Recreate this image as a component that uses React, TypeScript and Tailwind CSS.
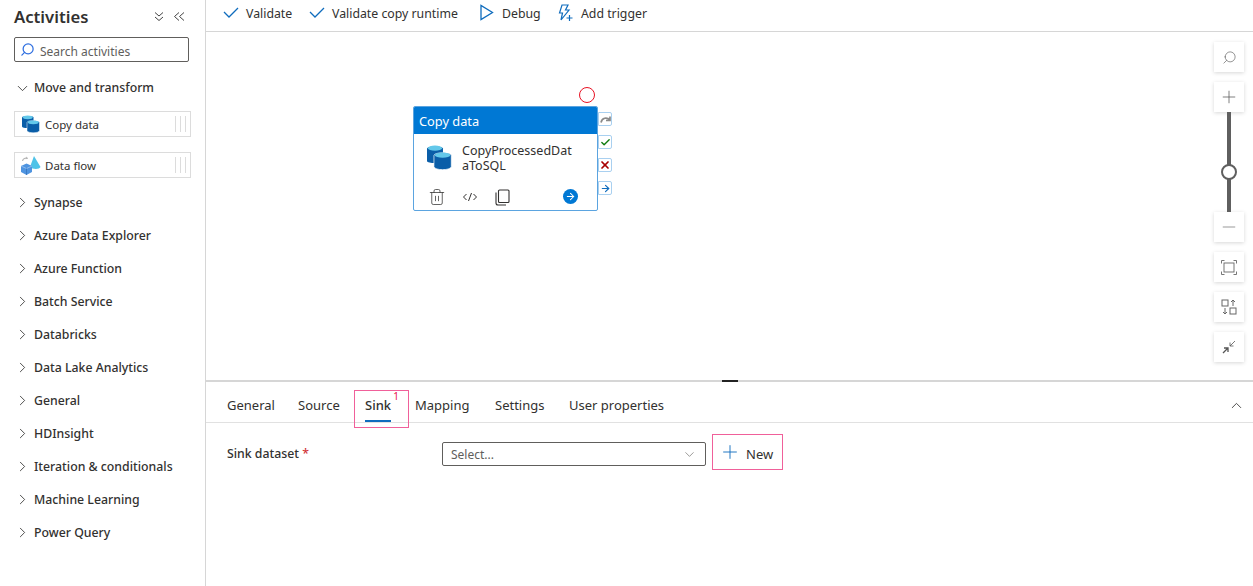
import { type ReactNode } from 'react';
import { ChevronDown, ChevronRight, ChevronUp, Search, Plus, Trash2, Minus, ArrowRight, X, Check } from 'lucide-react';

const GROUPS = [
  'Synapse',
  'Azure Data Explorer',
  'Azure Function',
  'Batch Service',
  'Databricks',
  'Data Lake Analytics',
  'General',
  'HDInsight',
  'Iteration & conditionals',
  'Machine Learning',
  'Power Query',
];

const TABS = [
  { label: 'General', width: 'w-[47px]' },
  { label: 'Source', width: 'w-[43px]' },
  { label: 'Sink', width: 'w-[26px]' },
  { label: 'Mapping', width: 'w-[56px]' },
  { label: 'Settings', width: 'w-[50px]' },
  { label: 'User properties', width: 'w-[96px]' },
];

function CopyIcon({ size }: { size: number }) {
  return (
    <svg width={size} height={size} viewBox="0 0 18 18">
      <path d="M0 2.500C0 .500 11.500 .500 11.500 2.500V11.500C11.500 13.500 0 13.500 0 11.500z" fill="#0a5ea8" />
      <ellipse cx="5.750" cy="2.300" rx="5" ry="1.900" fill="#63c8ea" />
      <path d="M5 7.500C5 5 17.500 5 17.500 7.500V15.500C17.500 18.500 5 18.500 5 15.500z" fill="#0a5ea8" stroke="#fff" strokeWidth="0.500" />
      <ellipse cx="11.250" cy="7.300" rx="5.500" ry="1.900" fill="#63c8ea" />
    </svg>
  );
}

function DataFlowIcon() {
  return (
    <svg width="20" height="20" viewBox="0 0 20 20">
      <path d="M1.500 6a3.500 3.500 0 0 1 5-2.500" fill="none" stroke="#b5b5b5" strokeWidth="1.200" />
      <path d="M5.500 1.500l1.500 2-2.300.7z" fill="#b5b5b5" />
      <path d="M13 1l6.500 11c-1 2.500-8 2.500-10.500 0z" fill="#4fc3e8" />
      <path d="M0 11l5.500-2.500L11 11v6l-5.500 3L0 17z" fill="#4f94e0" />
      <path d="M0 11l5.500 2.500L11 11" fill="none" stroke="#a8ccf2" strokeWidth="0.700" />
      <path d="M5.500 13.500V20" stroke="#2f6fb8" strokeWidth="0.700" />
    </svg>
  );
}

function DragGrip() {
  return (
    <div className="flex h-[16px] gap-[4px]">
      <span className="w-px bg-[#dcdcdc]" />
      <span className="w-px bg-[#dcdcdc]" />
      <span className="w-px bg-[#dcdcdc]" />
    </div>
  );
}

function ActivityItem({ icon, label }: { icon: ReactNode; label: string }) {
  return (
    <div className="ml-[14px] flex h-[26px] w-[177px] items-center border border-[#dcdcdc] pr-[4px] pl-[6px]">
      <div className="flex w-[23px] shrink-0 items-center">{icon}</div>
      <span className="ml-[1px] flex-1 pt-[2px] text-[11.500px] text-[#323130]">{label}</span>
      <DragGrip />
    </div>
  );
}

function ToolbarButton({ icon, label, className }: { icon: ReactNode; label: string; className: string }) {
  return (
    <div className={`flex items-center ${className}`}>
      <div className="flex w-[24px] shrink-0 items-center">{icon}</div>
      <span className="pt-[3px] text-[12.300px] text-[#323130]">{label}</span>
    </div>
  );
}

function CheckMark() {
  return (
    <svg width="16" height="11" viewBox="0 0 16 11" fill="none" stroke="#0f6cbd" strokeWidth="1.300" className="ml-[1px]">
      <path d="M1 5l5 5 9-9" />
    </svg>
  );
}

function ZoomButton({ children }: { children: ReactNode }) {
  return (
    <div className="flex h-[30px] w-[30px] items-center justify-center bg-white shadow-[0_1px_4px_rgba(0,0,0,0.16)]">
      {children}
    </div>
  );
}

function PortBadge({ children }: { children: ReactNode }) {
  return (
    <div className="flex h-[14px] w-[14px] items-center justify-center rounded-r-[2px] border border-[#a9d0f0] bg-white">
      {children}
    </div>
  );
}

export default function App() {
  return (
    <div className="flex h-[586px] w-[1253px] overflow-hidden bg-white font-['Noto_Sans',sans-serif] text-[#323130]">
      <aside className="w-[206px] shrink-0 border-r border-[#d6d6d6]">
        <div className="flex h-[33px] items-center justify-between pr-[19px] pl-[14px]">
          <h1 className="pt-[2px] text-[16.700px] leading-none font-semibold">Activities</h1>
          <div className="flex items-center gap-[6px] text-[#444]">
            <svg width="14" height="14" viewBox="0 0 14 14" fill="none" stroke="currentColor">
              <path d="M3 2.500l4 3.500 4-3.500M3 7l4 3.500L11 7" />
            </svg>
            <svg width="14" height="14" viewBox="0 0 14 14" fill="none" stroke="currentColor">
              <path d="M7 2.500L2.500 6.500 7 10.500M12 2.500L7.500 6.500l4.500 4" />
            </svg>
          </div>
        </div>
        <div className="mt-[4px] ml-[14px] flex h-[25px] w-[175px] items-center rounded-[2px] border border-[#605e5c] pl-[5px]">
          <Search size={15} className="-scale-x-100 text-[#2f6fe0]" />
          <span className="ml-[5px] pt-[4px] text-[12px] text-[#605e5c]">Search activities</span>
        </div>
        <div className="mt-[15px] flex h-[22px] items-center pl-[14px]">
          <ChevronDown size={17} strokeWidth={1.200} className="text-[#323130]" />
          <span className="ml-[3px] text-[12.300px] font-medium">Move and transform</span>
        </div>
        <div className="mt-[12px] flex flex-col gap-[15px]">
          <ActivityItem icon={<div className="ml-[1px]"><CopyIcon size={18} /></div>} label="Copy data" />
          <ActivityItem icon={<DataFlowIcon />} label="Data flow" />
        </div>
        <div className="mt-[8px] flex flex-col">
          {GROUPS.map((group) => (
            <div key={group} className="flex h-[33px] items-center pl-[14px]">
              <ChevronRight size={17} strokeWidth={1.200} className="text-[#323130]" />
              <span className="ml-[3px] pt-[1px] text-[12.300px] font-medium">{group}</span>
            </div>
          ))}
        </div>
      </aside>

      <main className="flex min-w-0 flex-1 flex-col">
        <div className="flex h-[32px] shrink-0 items-center border-b border-[#d6d6d6] pb-[6px] pl-[16px]">
          <ToolbarButton className="w-[86px]" icon={<CheckMark />} label="Validate" />
          <ToolbarButton className="w-[170px]" icon={<CheckMark />} label="Validate copy runtime" />
          <ToolbarButton
            className="w-[79px]"
            icon={
              <svg width="16" height="17" viewBox="0 0 16 17" fill="none" stroke="#0f6cbd" strokeWidth="1.300" className="ml-[1px]">
                <path d="M2 1.500v14l11.500-7z" />
              </svg>
            }
            label="Debug"
          />
          <ToolbarButton
            className="w-[110px]"
            icon={
              <svg width="17" height="18" viewBox="0 0 17 18" fill="none" stroke="#0f6cbd" strokeWidth="1.200">
                <path d="M5 1h6L8.500 6H12L4 16l1.500-7H2.500zM12.500 11v6M9.500 14h6" />
              </svg>
            }
            label="Add trigger"
          />
        </div>

        <div className="relative h-[350px] shrink-0 border-b-2 border-[#d6d6d6]">
          <div className="absolute top-[55px] left-[373px] h-[16px] w-[16px] rounded-full border border-[#e81123]" />

          <div className="absolute top-[74px] left-[207px] h-[105px] w-[185px] overflow-hidden rounded-[2px] border border-[#5ba4e0] bg-white">
            <div className="flex h-[27px] items-center bg-[#0078d4] pt-[3px] pl-[5px] text-[12.800px] text-white">Copy data</div>
            <div className="mt-[10px] flex items-start pl-[13px]">
              <div className="mt-[1px]">
                <CopyIcon size={25} />
              </div>
              <div className="mt-[-1px] ml-[10px] w-[116px] text-[12.500px] leading-[15px] break-all">CopyProcessedDataToSQL</div>
            </div>
            <div className="relative mt-[15px] ml-[14px] flex items-center text-[#323130]">
              <Trash2 size={18} strokeWidth={1} />
              <svg width="16" height="12" viewBox="0 0 16 12" fill="none" stroke="currentColor" className="ml-[16px]">
                <path d="M4.500 3L1.500 6l3 3M11.500 3l3 3-3 3M9.500 2l-3 8" />
              </svg>
              <svg width="15" height="17" viewBox="0 0 15 17" fill="none" stroke="currentColor" strokeWidth="1.100" className="ml-[17px]">
                <rect x="3.500" y="1" width="10.500" height="12.500" rx="1" />
                <path d="M1 3.500v10.500a2 2 0 0 0 2 2h8" />
              </svg>
              <div className="absolute top-[1px] left-[135px] flex h-[15px] w-[15px] items-center justify-center rounded-full bg-[#0078d4]">
                <ArrowRight size={11} strokeWidth={2.200} className="text-white" />
              </div>
            </div>
          </div>

          <div className="absolute top-[80px] left-[392px] flex flex-col gap-[9px]">
            <PortBadge>
              <svg width="11" height="9" viewBox="0 0 11 9" fill="none" stroke="#8a8a8a" strokeWidth="1.700">
                <path d="M1 7.500C2 2.500 7 2 10 5M10 1.500V5.500H6" />
              </svg>
            </PortBadge>
            <PortBadge>
              <Check size={11} strokeWidth={3} className="text-[#107c10]" />
            </PortBadge>
            <PortBadge>
              <X size={12} strokeWidth={3.500} className="text-[#a80000]" />
            </PortBadge>
            <PortBadge>
              <ArrowRight size={11} strokeWidth={2.500} className="text-[#0f6cbd]" />
            </PortBadge>
          </div>

          <div className="absolute top-[10px] right-[9px] flex flex-col items-center">
            <ZoomButton>
              <Search size={15} strokeWidth={1} className="-scale-x-100 text-[#555]" />
            </ZoomButton>
            <div className="mt-[10px]">
              <ZoomButton>
                <Plus size={20} strokeWidth={0.900} className="text-[#555]" />
              </ZoomButton>
            </div>
            <div className="relative h-[100px] w-[4px] bg-[#5f5f5f]">
              <div className="absolute top-[52px] left-[-6px] h-[16px] w-[16px] rounded-full border-2 border-[#5f5f5f] bg-white" />
            </div>
            <ZoomButton>
              <Minus size={20} strokeWidth={0.900} className="text-[#777]" />
            </ZoomButton>
            <div className="mt-[10px] flex flex-col gap-[10px]">
              <ZoomButton>
                <svg width="16" height="15" viewBox="0 0 16 15" fill="none" stroke="#666" strokeWidth="0.900">
                  <path d="M.500 3.500V.500H3.500M12.500 .500h3V3.500M.500 11.500v3H3.500M12.500 14.500h3V11.500" />
                  <rect x="3" y="3" width="10" height="9" />
                </svg>
              </ZoomButton>
              <ZoomButton>
                <svg width="16" height="16" viewBox="0 0 16 16" fill="none" stroke="#666" strokeWidth="1">
                  <rect x="1" y="1" width="6" height="6" />
                  <rect x="9" y="9" width="6" height="6" />
                  <path d="M12 7V1M10 3l2-2 2 2M4 9v6M2 13l2 2 2-2" />
                </svg>
              </ZoomButton>
              <ZoomButton>
                <svg width="14" height="14" viewBox="0 0 14 14" fill="none" stroke="#555">
                  <path d="M8 6l5-5M8 2.500V6h3.500" strokeWidth="0.800" />
                  <path d="M6 8l-5 5M2 8h4v4" strokeWidth="1.300" />
                </svg>
              </ZoomButton>
            </div>
          </div>

          <div className="absolute right-[515px] bottom-[-2px] h-[2px] w-[16px] bg-[#222]" />
        </div>

        <div className="relative flex-1">
          <div className="flex h-[41px] items-center justify-between border-b border-[#e1e1e1] pt-[7px] pr-[8px] pl-[21px]">
            <div className="flex h-full items-stretch gap-[24px]">
              {TABS.map((tab) =>
                tab.label === 'Sink' ? (
                  <div key={tab.label} className={`relative flex items-center text-[13px] font-medium ${tab.width}`}>
                    {tab.label}
                    <span className="absolute right-0 bottom-0 left-0 h-[2px] bg-[#0f6cbd]" />
                  </div>
                ) : (
                  <div key={tab.label} className={`flex items-center text-[13px] ${tab.width}`}>
                    {tab.label}
                  </div>
                ),
              )}
            </div>
            <ChevronUp size={17} strokeWidth={1.200} />
          </div>

          <div className="flex items-start pt-[11px] pl-[21px]">
            <div className="mt-[11px] w-[215px] text-[12.300px] font-medium">
              Sink dataset <span className="text-[#d13438]">*</span>
            </div>
            <div className="mt-[8px] flex h-[24px] w-[264px] items-center justify-between rounded-[2px] border border-[#605e5c] pr-[8px] pl-[8px] text-[12px] text-[#605e5c]">
              <span className="pt-[2px]">Select...</span>
              <ChevronDown size={15} strokeWidth={1} />
            </div>
            <div className="ml-[6px] flex h-[36px] w-[71px] items-center border border-[#f0609a] pl-[6px]">
              <Plus size={22} strokeWidth={1} className="text-[#0f6cbd]" />
              <span className="ml-[5px] pt-[5px] text-[13px]">New</span>
            </div>
          </div>

          <div className="absolute top-[8px] left-[148px] h-[38px] w-[55px] border border-[#f0609a]">
            <span className="absolute top-[-1px] right-[9px] text-[10px] leading-[12px] text-[#e8114b]">1</span>
          </div>
        </div>
      </main>
    </div>
  );
}
